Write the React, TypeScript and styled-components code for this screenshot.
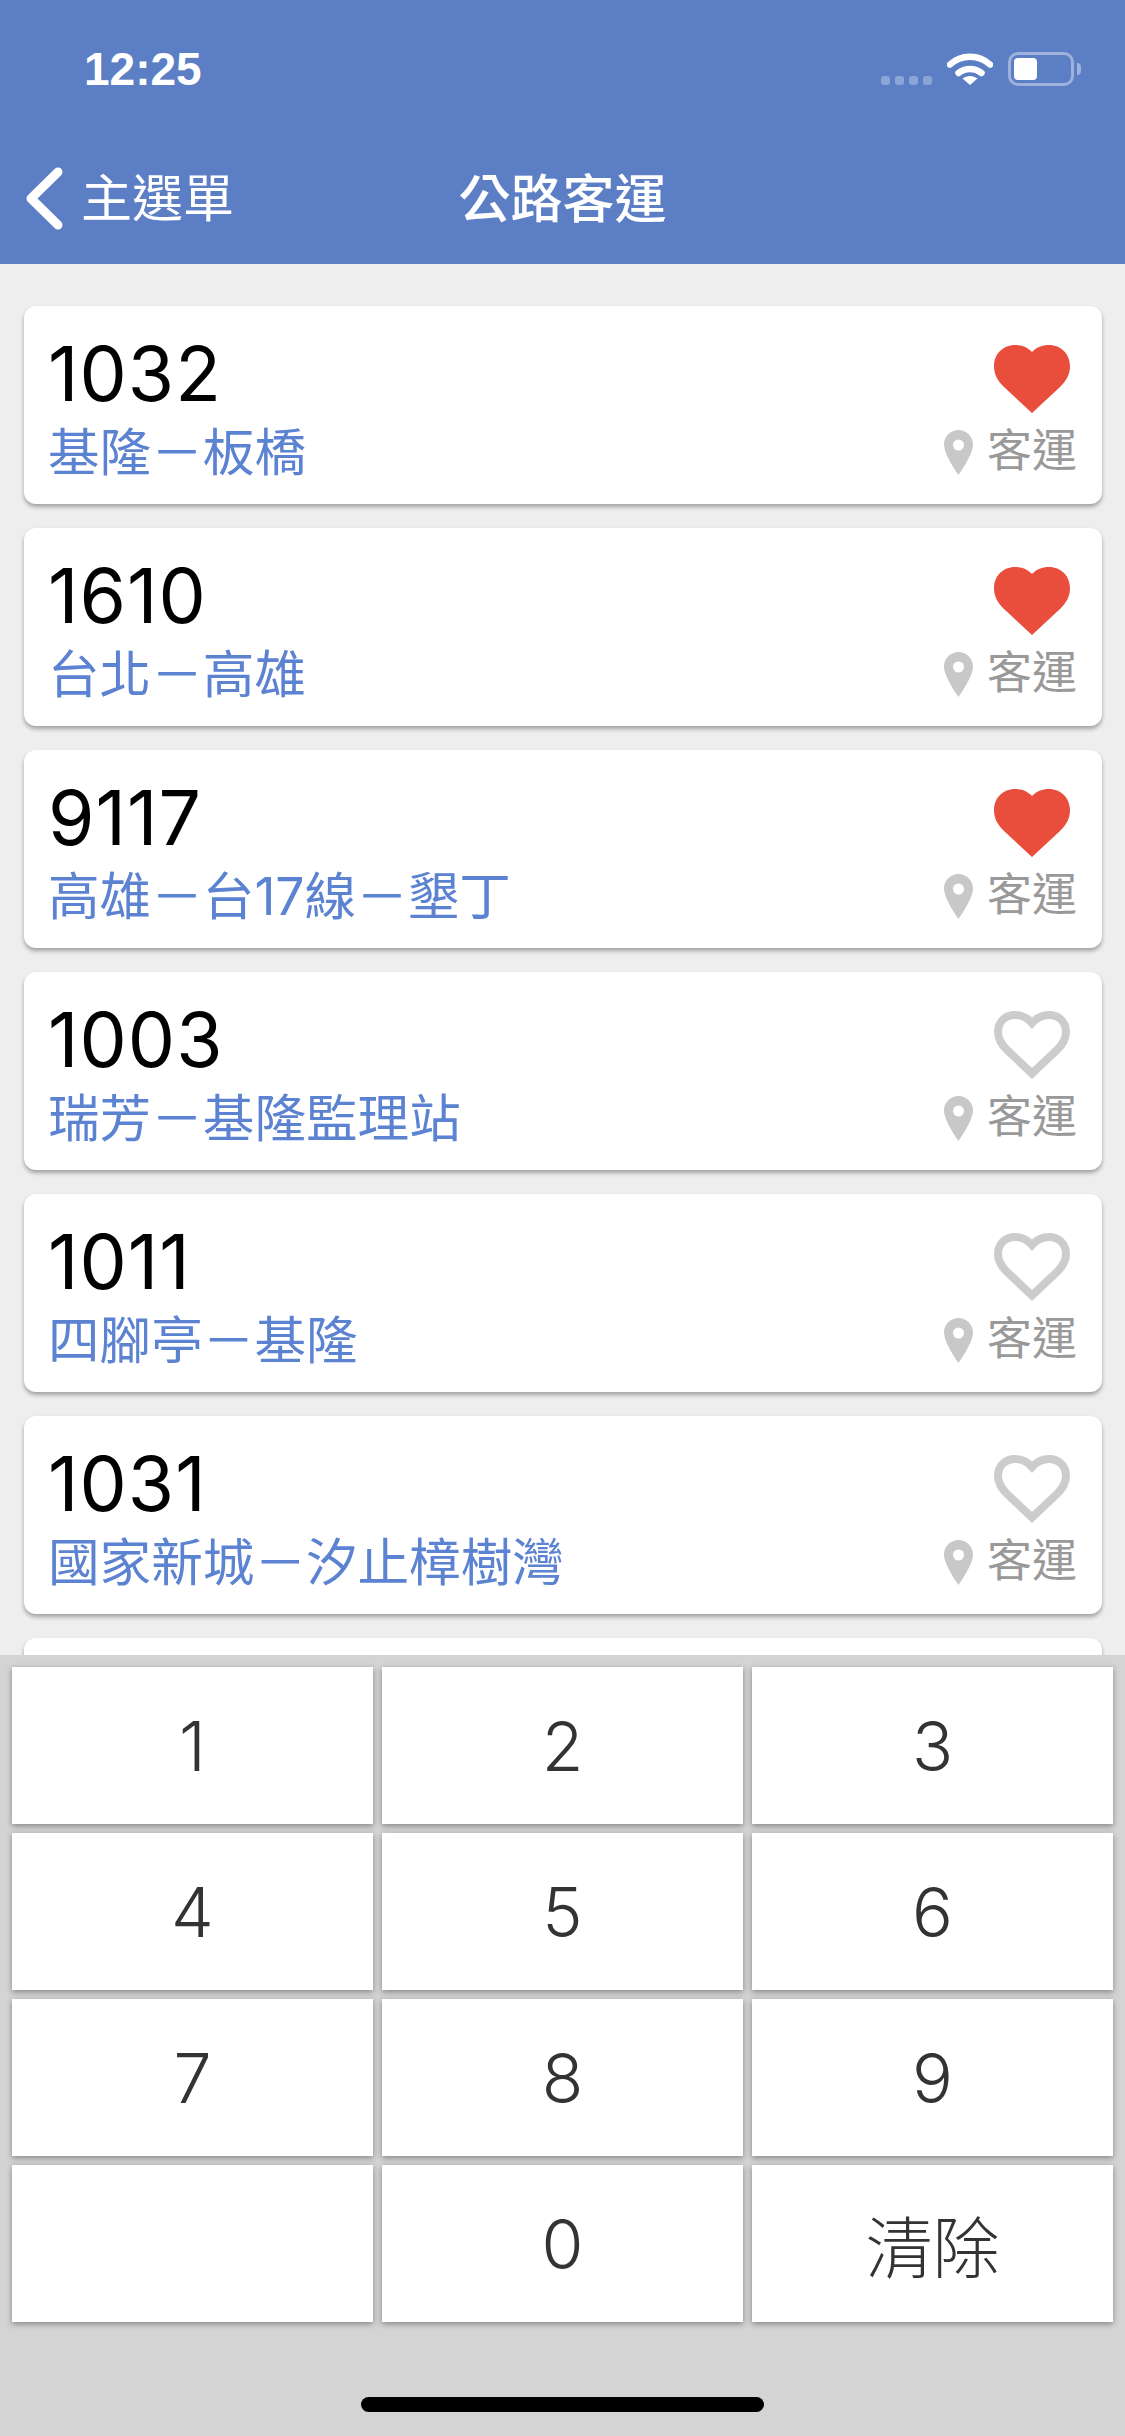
import React from 'react';
import styled, { createGlobalStyle } from 'styled-components';

const CJK = '"Liberation Sans", "Noto Sans CJK TC", sans-serif';
const ROUNDED = 'Inter, "Noto Sans CJK TC", sans-serif';

const GlobalStyle = createGlobalStyle`
  html, body {
    margin: 0;
    padding: 0;
    background: #eeeeee;
  }
`;

const Screen = styled.div`
  width: 1125px;
  height: 2436px;
  display: flex;
  flex-direction: column;
  overflow: hidden;
  font-family: ${CJK};
`;

const Header = styled.header`
  height: 264px;
  flex: none;
  background: #5c7ec4;
  color: #fff;
  display: flex;
  flex-direction: column;
`;

const StatusBar = styled.div`
  height: 147px;
  padding: 52px 51px 0 84px;
  box-sizing: border-box;
  display: flex;
  justify-content: space-between;
  align-items: flex-start;
`;

const Time = styled.span`
  font-size: 46px;
  line-height: 34px;
  font-weight: 600;
`;

const StatusIcons = styled.div`
  display: flex;
  align-items: flex-start;
  gap: 15px;
`;

const SignalDots = styled.div`
  display: flex;
  gap: 5px;
  padding-top: 24px;
`;

const SignalDot = styled.span`
  width: 9px;
  height: 9px;
  border-radius: 3px;
  background: rgba(255, 255, 255, 0.3);
`;

const Battery = styled.div`
  position: relative;
  width: 66px;
  height: 34px;
  box-sizing: border-box;
  border: 3px solid rgba(255, 255, 255, 0.4);
  border-radius: 10px;
  padding: 3px;

  &::after {
    content: '';
    position: absolute;
    right: -10px;
    top: 8px;
    width: 4px;
    height: 12px;
    border-radius: 0 6px 6px 0;
    background: rgba(255, 255, 255, 0.4);
  }
`;

const BatteryFill = styled.div`
  width: 23px;
  height: 22px;
  border-radius: 4px;
  background: #fff;
`;

const NavBar = styled.nav`
  display: grid;
  grid-template-columns: 1fr auto 1fr;
  align-items: center;
  height: 96px;
  padding: 0 26px;
`;

const BackLink = styled.div`
  display: flex;
  align-items: center;
  gap: 18px;
  font-size: 51px;
`;

const BackIcon = styled.svg`
  display: block;
  margin-top: 6px;
`;

const NavTitle = styled.h1`
  margin: 0;
  font-size: 52px;
  font-weight: 500;
`;

const RouteList = styled.main`
  flex: 1;
  min-height: 0;
  overflow: hidden;
  display: flex;
  flex-direction: column;
  gap: 24px;
  padding: 42px 23px 0 24px;
`;

const Card = styled.article`
  flex: none;
  height: 198px;
  box-sizing: border-box;
  background: #fff;
  border-radius: 12px;
  box-shadow: 0 3px 4px rgba(0, 0, 0, 0.32);
  padding: 29px 24px 0 24px;
  display: flex;
  justify-content: space-between;
`;

const RouteInfo = styled.div`
  display: flex;
  flex-direction: column;
`;

const RouteNumber = styled.div`
  font-family: ${ROUNDED};
  font-size: 75px;
  line-height: 78px;
  letter-spacing: 1px;
  color: #000;
`;

const RouteName = styled.div`
  font-family: ${ROUNDED};
  font-size: 51.600px;
  line-height: 78px;
  color: #5c82d2;
`;

const RouteMeta = styled.div`
  display: flex;
  flex-direction: column;
  align-items: flex-end;
`;

const Favourite = styled.svg`
  width: 76px;
  height: 68px;
  margin: 10px 8px 0 0;
  display: block;
`;

const Operator = styled.div`
  display: flex;
  align-items: center;
  gap: 14px;
  margin-top: 11px;
  padding-right: 1px;
  font-size: 45px;
  line-height: 56px;
  color: #999;
`;

const Keypad = styled.section`
  flex: none;
  height: 781px;
  box-sizing: border-box;
  background: #d4d4d4;
  padding: 12px 12px 0;
  display: flex;
  flex-direction: column;
  position: relative;
  z-index: 1;
`;

const KeyGrid = styled.div`
  display: grid;
  grid-template-columns: repeat(3, 361px);
  grid-auto-rows: 157px;
  gap: 9px;
`;

const Key = styled.button<{ $cjk?: boolean }>`
  border: 0;
  border-radius: 0;
  padding: 0;
  background: #fff;
  box-shadow: 0 2px 6px rgba(0, 0, 0, 0.38);
  color: #333;
  font-family: ${ROUNDED};
  font-weight: 300;
  font-size: ${(p) => (p.$cjk ? '67px' : '68px')};
`;

const HomeBar = styled.div`
  width: 403px;
  height: 15px;
  border-radius: 8px;
  background: #000;
  margin: 75px auto 0;
`;

const HEART =
  'M38 7C43 2 48 0 55 0C67 0 76 9 76 21C76 30 72 36 66 42L38 68L10 42C4 36 0 30 0 21C0 9 9 0 21 0C28 0 33 2 38 7Z';
const HEART_LINE =
  'M38 12C43 6.500 48 4 55 4C65 4 72 11 72 21C72 29 68 34 63 39L38 62.500L13 39C8 34 4 29 4 21C4 11 11 4 21 4C28 4 33 6.500 38 12Z';

const routes = [
  { no: '1032', name: '基隆－板橋', fav: true },
  { no: '1610', name: '台北－高雄', fav: true },
  { no: '9117', name: '高雄－台17線－墾丁', fav: true },
  { no: '1003', name: '瑞芳－基隆監理站', fav: false },
  { no: '1011', name: '四腳亭－基隆', fav: false },
  { no: '1031', name: '國家新城－汐止樟樹灣', fav: false },
];

const keys = ['1', '2', '3', '4', '5', '6', '7', '8', '9', '', '0', '清除'];

function Heart({ filled }: { filled: boolean }) {
  return (
    <Favourite viewBox="0 0 76 68">
      {filled ? (
        <path d={HEART} fill="#e94e3d" />
      ) : (
        <path d={HEART_LINE} fill="none" stroke="#cccccc" strokeWidth="8" />
      )}
    </Favourite>
  );
}

function Pin() {
  return (
    <svg width="29" height="45" viewBox="0 0 29 45">
      <path
        fillRule="evenodd"
        fill="#c8c8c8"
        d="M14.500 0C6.500 0 0 6.500 0 14.500C0 25 14.500 45 14.500 45S29 25 29 14.500C29 6.500 22.500 0 14.500 0ZM14.500 9.500a5.500 5.500 0 1 1 0 11a5.500 5.500 0 1 1 0-11Z"
      />
    </svg>
  );
}

function Wifi() {
  return (
    <svg width="46" height="33" viewBox="0 0 46 33">
      <path d="M3 12.500C14 2 32 2 43 12.500" fill="none" stroke="#fff" strokeWidth="6.500" strokeLinecap="round" />
      <path d="M11.500 21C18 15.500 28 15.500 34.500 21" fill="none" stroke="#fff" strokeWidth="6.500" strokeLinecap="round" />
      <path d="M15.500 26.500C20 23 26 23 30.500 26.500L23 33Z" fill="#fff" />
    </svg>
  );
}

function BackChevron() {
  return (
    <BackIcon width="37" height="63" viewBox="0 0 37 63">
      <path d="M32 5L5 31.500L32 58" fill="none" stroke="#fff" strokeWidth="9" strokeLinecap="round" strokeLinejoin="round" />
    </BackIcon>
  );
}

export default function App() {
  return (
    <Screen>
      <GlobalStyle />
      <Header>
        <StatusBar>
          <Time>12:25</Time>
          <StatusIcons>
            <SignalDots>
              <SignalDot />
              <SignalDot />
              <SignalDot />
              <SignalDot />
            </SignalDots>
            <Wifi />
            <Battery>
              <BatteryFill />
            </Battery>
          </StatusIcons>
        </StatusBar>
        <NavBar>
          <BackLink>
            <BackChevron />
            主選單
          </BackLink>
          <NavTitle>公路客運</NavTitle>
        </NavBar>
      </Header>
      <RouteList>
        {routes.map((route) => (
          <Card key={route.no}>
            <RouteInfo>
              <RouteNumber>{route.no}</RouteNumber>
              <RouteName>{route.name}</RouteName>
            </RouteInfo>
            <RouteMeta>
              <Heart filled={route.fav} />
              <Operator>
                <Pin />
                客運
              </Operator>
            </RouteMeta>
          </Card>
        ))}
        <Card />
      </RouteList>
      <Keypad>
        <KeyGrid>
          {keys.map((label, i) => (
            <Key key={i} $cjk={label === '清除'}>
              {label}
            </Key>
          ))}
        </KeyGrid>
        <HomeBar />
      </Keypad>
    </Screen>
  );
}
